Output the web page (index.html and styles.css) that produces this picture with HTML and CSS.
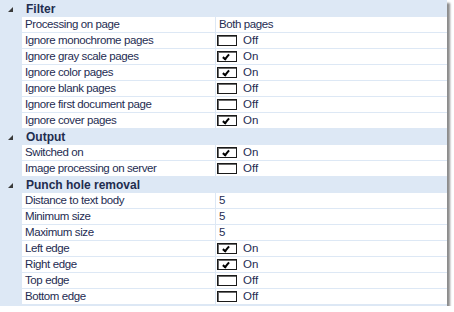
FILE: index.html
```html
<!DOCTYPE html>
<html>
<head>
<meta charset="utf-8">
<link rel="stylesheet" href="styles.css">
</head>
<body>
<div class="panel">
  <div class="group-head"><span class="toggle"></span><span class="gtitle">Filter</span></div>
  <div class="row"><div class="label">Processing on page</div><div class="value">Both pages</div></div>
  <div class="row"><div class="label">Ignore monochrome pages</div><div class="value"><span class="cb"></span><span class="state">Off</span></div></div>
  <div class="row"><div class="label">Ignore gray scale pages</div><div class="value"><span class="cb on"></span><span class="state">On</span></div></div>
  <div class="row"><div class="label">Ignore color pages</div><div class="value"><span class="cb on"></span><span class="state">On</span></div></div>
  <div class="row"><div class="label">Ignore blank pages</div><div class="value"><span class="cb"></span><span class="state">Off</span></div></div>
  <div class="row"><div class="label">Ignore first document page</div><div class="value"><span class="cb"></span><span class="state">Off</span></div></div>
  <div class="row"><div class="label">Ignore cover pages</div><div class="value"><span class="cb on"></span><span class="state">On</span></div></div>

  <div class="group-head"><span class="toggle"></span><span class="gtitle">Output</span></div>
  <div class="row"><div class="label">Switched on</div><div class="value"><span class="cb on"></span><span class="state">On</span></div></div>
  <div class="row"><div class="label">Image processing on server</div><div class="value"><span class="cb"></span><span class="state">Off</span></div></div>

  <div class="group-head"><span class="toggle"></span><span class="gtitle">Punch hole removal</span></div>
  <div class="row"><div class="label">Distance to text body</div><div class="value">5</div></div>
  <div class="row"><div class="label">Minimum size</div><div class="value">5</div></div>
  <div class="row"><div class="label">Maximum size</div><div class="value">5</div></div>
  <div class="row"><div class="label">Left edge</div><div class="value"><span class="cb on"></span><span class="state">On</span></div></div>
  <div class="row"><div class="label">Right edge</div><div class="value"><span class="cb on"></span><span class="state">On</span></div></div>
  <div class="row"><div class="label">Top edge</div><div class="value"><span class="cb"></span><span class="state">Off</span></div></div>
  <div class="row"><div class="label">Bottom edge</div><div class="value"><span class="cb"></span><span class="state">Off</span></div></div>
</div>
</body>
</html>
```
FILE: styles.css
```css
html, body {
  margin: 0;
  padding: 0;
  background: #ffffff;
}
body {
  font-family: "Liberation Sans", Arial, sans-serif;
  font-size: 11.5px;
  letter-spacing: -0.4px;
  color: #1e2c52;
}
.panel {
  width: 447px;
  background: #dde8f5;
  padding: 1px 0 1px 0;
  box-shadow: 3px 3px 2px rgba(0, 0, 0, 0.45);
}
.group-head {
  height: 16px;
  display: flex;
  align-items: center;
}
.toggle {
  width: 26px;
  height: 16px;
  position: relative;
}
.toggle::after {
  content: "";
  position: absolute;
  left: 8px;
  top: 6px;
  width: 0;
  height: 0;
  border-left: 5px solid transparent;
  border-bottom: 5px solid #3a3a3a;
}
.gtitle {
  font-weight: bold;
  font-size: 12px;
  letter-spacing: 0;
  color: #1f2d4f;
}
.row {
  display: grid;
  grid-template-columns: 193px 1fr;
  margin-left: 22px;
  height: 15px;
  margin-bottom: 1px;
  background: #ffffff;
  line-height: 15px;
}
.label {
  padding-left: 3px;
  white-space: nowrap;
}
.value {
  border-left: 1px solid #dde8f5;
  padding-left: 3px;
  display: flex;
  align-items: center;
}
.cb {
  box-sizing: border-box;
  width: 20px;
  height: 11px;
  margin-left: -2px;
  border: 1px solid #1a1a1a;
  box-shadow: inset 1px 1px 0 #6a6a6a;
  background: #ffffff;
  position: relative;
}
.cb.on::after {
  content: "";
  position: absolute;
  left: 6px;
  top: 1px;
  width: 2px;
  height: 5px;
  border-right: 2px solid #000;
  border-bottom: 2px solid #000;
  transform: rotate(40deg);
}
.state {
  margin-left: 6px;
  letter-spacing: 0;
}
```
